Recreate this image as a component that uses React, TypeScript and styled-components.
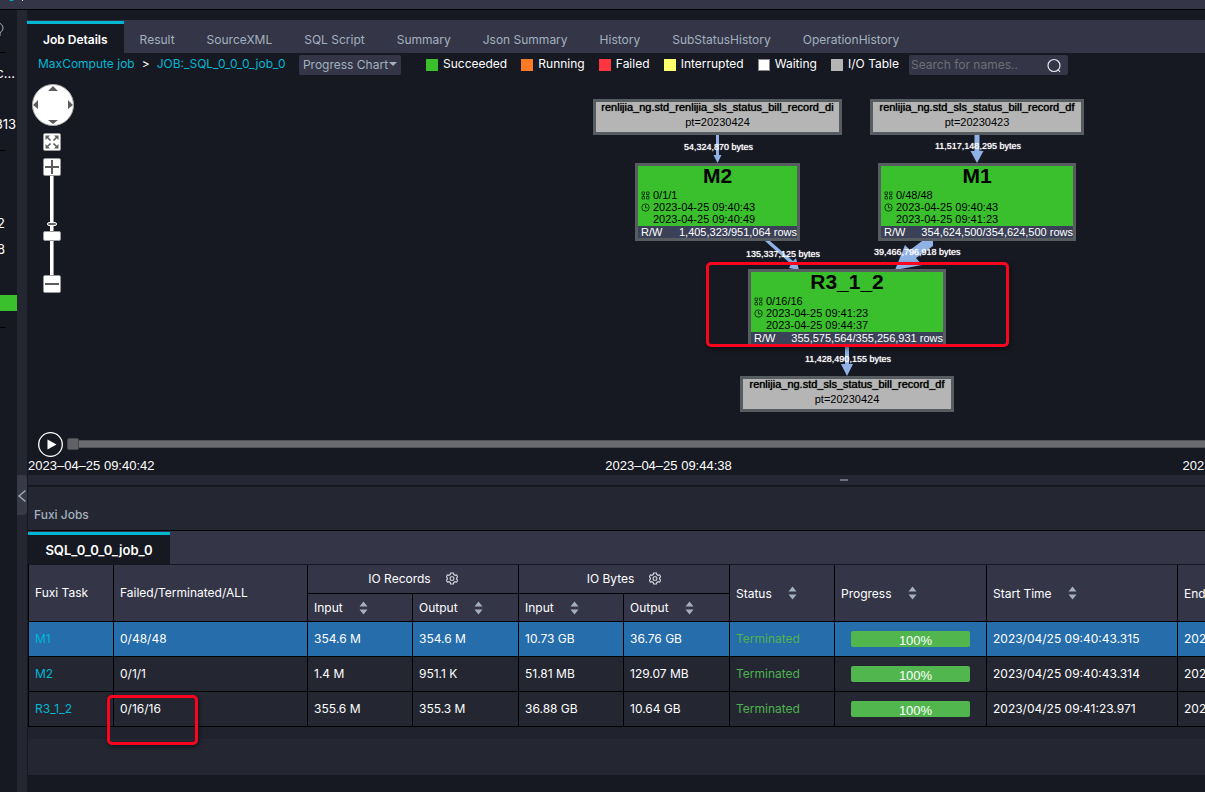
import React from "react";
import styled, { createGlobalStyle } from "styled-components";

const C = {
  deep: "#171922",
  panel: "#242732",
  raised: "#343648",
  cyan: "#00b7d3",
  muted: "#a3b1bf",
  green: "#3abf2d",
};

const GlobalStyle = createGlobalStyle`
  *, *::before { box-sizing: border-box; }
  html, body { margin: 0; background: ${C.deep}; overflow: hidden; }
  body { font-family: Inter, "Liberation Sans", sans-serif; font-size: 12px; color: #fff; }
  button, input { font: inherit; color: inherit; margin: 0; padding: 0; }
  a { text-decoration: none; color: ${C.cyan}; }
`;

const Shell = styled.div`
  position: relative;
  min-height: 100vh;
  overflow: hidden;
  display: flex;
  flex-direction: column;
`;

const TopBar = styled.header`
  height: 10px;
  padding-left: 9px;
  background: ${C.raised};
  border-bottom: 1px solid #000;
  svg { display: block; }
`;

const Body = styled.div`
  flex: 1;
  display: grid;
  grid-template-columns: 17px 10px minmax(0, 1fr);
`;

const Sidebar = styled.aside`
  overflow: hidden;
  display: flex;
  flex-direction: column;
  background: ${C.deep};
`;

const SideRow = styled.div<{ $h: number; $end?: number }>`
  height: ${(p) => p.$h}px;
  padding-right: ${(p) => p.$end ?? 0}px;
  display: flex;
  justify-content: flex-end;
  align-items: center;
  white-space: nowrap;
  font-size: 13px;
  svg { flex: none; }
`;

const SideRule = styled.hr`
  width: 6px;
  height: 1px;
  margin: 0;
  border: 0;
  background: #000;
`;

const SideStatus = styled.div`
  height: 16px;
  margin-bottom: 16px;
  background: ${C.green};
`;

const Gutter = styled.div`
  background: ${C.panel};
  padding-top: 465px;
`;

const CollapseButton = styled.button`
  display: flex;
  align-items: center;
  justify-content: center;
  width: 10px;
  height: 40px;
  padding-top: 2px;
  border: 0;
  border-radius: 0 4px 4px 0;
  background: #383a47;
  color: ${C.muted};
  svg { flex: none; }
`;

const Main = styled.main`
  display: flex;
  flex-direction: column;
  overflow: hidden;
`;

const TabBar = styled.nav<{ $top: number }>`
  margin-top: ${(p) => p.$top}px;
  height: 33px;
  display: flex;
  background: ${C.raised};
`;

const Tab = styled.button<{ $active?: boolean }>`
  margin-top: 1px;
  padding: 1px 16px 0;
  border: 0;
  border-top: 3px solid ${(p) => (p.$active ? C.cyan : "transparent")};
  background: ${(p) => (p.$active ? C.deep : "transparent")};
  color: ${(p) => (p.$active ? "#fff" : C.muted)};
  font-weight: ${(p) => (p.$active ? 600 : 400)};
  white-space: nowrap;
`;

const JobTab = styled(Tab)`
  min-width: 142px;
  font-size: 13px;
`;

const Toolbar = styled.div`
  height: 25px;
  display: flex;
  align-items: flex-start;
  padding: 2px 0 0 11px;
  white-space: nowrap;
`;

const Crumbs = styled.div`
  width: 261px;
  height: 17px;
  display: flex;
  align-items: center;
  gap: 7px;
`;

const ModeButton = styled.button`
  width: 102px;
  height: 20px;
  display: flex;
  align-items: center;
  justify-content: center;
  gap: 1px;
  padding-bottom: 2px;
  border: 0;
  border-radius: 2px;
  background: ${C.raised};
  color: ${C.muted};
`;

const Legend = styled.div`
  display: flex;
  width: 508px;
  height: 17px;
  padding: 0 10px 0 25px;
  justify-content: space-between;
`;

const LegendItem = styled.span`
  display: flex;
  align-items: center;
  gap: 5px;
`;

const Swatch = styled.i<{ $color: string }>`
  width: 12px;
  height: 12px;
  margin-top: 2px;
  background: ${(p) => p.$color};
  border: 1px solid ${(p) => (p.$color === "#ffffff" ? "#888" : p.$color)};
`;

const SearchBox = styled.label`
  width: 159px;
  height: 20px;
  display: flex;
  align-items: center;
  padding: 0 6px 0 2px;
  background: ${C.raised};
  border-radius: 2px;
`;

const SearchInput = styled.input`
  flex: 1;
  min-width: 0;
  padding-bottom: 2px;
  border: 0;
  outline: 0;
  background: transparent;
  &::placeholder { color: #6d6e73; opacity: 1; }
`;

const Canvas = styled.section`
  position: relative;
  height: 352px;
  font-family: "Liberation Sans", Arial, sans-serif;
`;

const Edges = styled.svg`
  position: absolute;
  inset: 0;
  width: 100%;
  height: 100%;
  fill: #8fb1e6;
`;

const Node = styled.div<{ $x: number; $y: number; $w: number }>`
  position: absolute;
  left: ${(p) => p.$x}px;
  top: ${(p) => p.$y}px;
  width: ${(p) => p.$w}px;
  border: 3px solid #575c60;
  font-size: 11px;
  line-height: 12px;
  color: #000;
  white-space: nowrap;
`;

const TableNode = styled(Node)`
  height: 36px;
  background: #b5b5b5;
  display: flex;
  flex-direction: column;
  align-items: center;
  line-height: 10px;
  gap: 5px;
`;

const TableName = styled.span`
  text-shadow: 0 0 1px #000;
`;

const TaskNode = styled(Node)`
  height: 78px;
  background: ${C.green};
`;

const TaskTitle = styled.h2`
  margin: 0;
  height: 23px;
  font-size: 21px;
  line-height: 19px;
  text-align: center;
`;

const TaskLine = styled.div`
  display: flex;
  align-items: center;
  gap: 3px;
  height: 12px;
  padding-left: 3px;
  svg { width: 9px; flex: none; }
`;

const TaskFooter = styled.div`
  display: flex;
  justify-content: space-between;
  height: 12px;
  margin-top: 1px;
  padding-left: 3px;
  background: #3b4257;
  color: #fff;
`;

const EdgeLabel = styled.span<{ $x: number; $y: number }>`
  position: absolute;
  left: ${(p) => p.$x}px;
  top: ${(p) => p.$y}px;
  font-size: 9px;
  line-height: 10px;
  white-space: nowrap;
  text-shadow: 0 0 1px #fff;
`;

const ZoomPanel = styled.div`
  position: absolute;
  left: 5px;
  top: 6px;
  width: 42px;
  display: flex;
  flex-direction: column;
  align-items: center;
`;

const PanButton = styled.button`
  width: 42px;
  height: 42px;
  margin-bottom: 7px;
  border: 1px solid #aaa;
  border-radius: 50%;
  background: #fff;
  svg { display: block; }
`;

const SquareButton = styled.button<{ $gap?: number }>`
  width: 18px;
  height: 18px;
  margin: 0 2px ${(p) => p.$gap ?? 0}px 0;
  border: 1px solid #999;
  border-radius: 2px;
  background: #fff;
  svg { display: block; }
`;

const ZoomTrack = styled.div`
  position: relative;
  width: 18px;
  height: 99px;
  margin-right: 2px;
  &::before {
    content: "";
    position: absolute;
    left: 4px;
    top: 46px;
    width: 10px;
    height: 4px;
    border: 1px solid #fff;
    border-radius: 2px;
    background: #666;
    z-index: 1;
  }
`;

const ZoomSlider = styled.input`
  display: block;
  width: 18px;
  height: 99px;
  appearance: none;
  background: transparent;
  writing-mode: vertical-lr;
  direction: rtl;
  &::-webkit-slider-runnable-track {
    width: 4px;
    background: #fff;
    border-right: 1px solid #999;
  }
  &::-webkit-slider-thumb {
    appearance: none;
    width: 18px;
    height: 10px;
    margin-left: -7px;
    background: #fff;
    border: 1px solid #999;
    border-radius: 2px;
  }
`;

const Timeline = styled.section`
  min-width: 1282px;
  height: 45px;
  padding-left: 1px;
`;

const TimelineRow = styled.div`
  display: flex;
  align-items: center;
  height: 29px;
  padding-left: 10px;
  gap: 4px;
`;

const PlayButton = styled.button`
  width: 25px;
  height: 25px;
  border: 0;
  background: transparent;
  svg { display: block; }
`;

const TimeSlider = styled.input`
  flex: 1;
  height: 12px;
  && { margin-bottom: 2px; }
  appearance: none;
  background: transparent;
  &::-webkit-slider-runnable-track {
    height: 8px;
    background: #6a6b6e;
    border: solid #505156;
    border-width: 1px 0;
  }
  &::-webkit-slider-thumb {
    appearance: none;
    width: 12px;
    height: 12px;
    margin-top: -3px;
    border: 1px solid #48494d;
    border-radius: 2px;
    background: #606164;
  }
`;

const TimeLabels = styled.div`
  display: flex;
  justify-content: space-between;
  font-size: 13px;
  line-height: 14px;
  font-family: "Liberation Sans", Arial, sans-serif;
`;

const Splitter = styled.div`
  min-width: 1632px;
  height: 12px;
  margin-left: 1px;
  display: flex;
  justify-content: center;
  padding-top: 4px;
  background: #252735;
  border-bottom: 2px solid ${C.deep};
  &::before { content: ""; width: 8px; height: 2px; background: #6b6d7a; }
`;

const JobsPanel = styled.section`
  border-left: 1px solid ${C.deep};
  background: #20222e;
`;

const JobsTitle = styled.h1`
  margin: 0;
  height: 44px;
  padding: 12px 6px 0;
  font-size: 12px;
  line-height: 32px;
  font-weight: 500;
  color: ${C.muted};
  background: ${C.panel};
  border-bottom: 1px solid #000;
`;

const Table = styled.table`
  width: 1341px;
  table-layout: fixed;
  border-collapse: separate;
  border-spacing: 0;
  border-left: 1px solid #000;
  border-top: 1px solid ${C.deep};
  font-weight: 400;
  text-align: left;
`;

const cell = `
  border-right: 1px solid #000;
  border-bottom: 1px solid #000;
  white-space: nowrap;
`;

const Th = styled.th<{ $h?: number; $raised?: boolean }>`
  ${cell}
  height: ${(p) => p.$h ?? 57}px;
  padding: 0 6px ${(p) => (p.$raised ? 2 : 0)}px;
  background: ${C.raised};
  font-weight: 400;
`;

const HeadContent = styled.div<{ $center?: boolean }>`
  display: flex;
  align-items: center;
  justify-content: ${(p) => (p.$center ? "center" : "flex-start")};
  gap: ${(p) => (p.$center ? 15 : 16)}px;
`;

const IconButton = styled.button`
  display: flex;
  border: 0;
  background: transparent;
  color: ${C.muted};
`;

const Row = styled.tr<{ $selected?: boolean }>`
  background: ${(p) => (p.$selected ? "#266dab" : C.panel)};
`;

const Td = styled.td`
  ${cell}
  height: 35px;
  padding: 0 6px 2px;
`;

const ProgressTd = styled(Td)`
  padding: 0 16px;
`;

const Terminated = styled.span`
  color: #4eb24f;
`;

const Progress = styled.div`
  height: 16px;
  padding-left: 10px;
  border-radius: 2px;
  background: #52b64f;
  font-family: "Liberation Sans", Arial, sans-serif;
  font-size: 13px;
  line-height: 19px;
  text-align: center;
`;

const Footer = styled.div`
  height: 36px;
  margin-top: 12px;
  background: ${C.panel};
`;

const Marker = styled.div<{ $x: number; $y: number; $w: number; $h: number }>`
  position: absolute;
  left: ${(p) => p.$x}px;
  top: ${(p) => p.$y}px;
  width: ${(p) => p.$w}px;
  height: ${(p) => p.$h}px;
  border: 3px solid #fb0420;
  border-radius: 5px;
  box-shadow: 1px 2px 4px rgba(0, 0, 0, 0.5);
  pointer-events: none;
`;

const SortIcon = () => (
  <svg width="9" height="14" viewBox="0 0 9 14" fill="currentColor">
    <path d="M4.5 0.5 8.5 5.5H.5zM4.5 13.5.5 8.5h8z" />
  </svg>
);

const GearIcon = () => (
  <svg width="12" height="13" viewBox="0 0 12 13" fill="none" stroke="#d5d9df" strokeWidth="1.1">
    <path d="M4.6 1h2.8l.4 1.6 1.3.7 1.5-.5 1 2-1 1.1v1.2l1 1.1-1 2-1.5-.5-1.3.7-.4 1.6H4.6l-.4-1.6-1.3-.7-1.5.5-1-2 1-1.1V5.9l-1-1.1 1-2 1.5.5 1.3-.7z" />
    <rect x="4.2" y="4.7" width="3.6" height="3.6" rx="1" />
  </svg>
);

const GridIcon = () => (
  <svg height="9" viewBox="0 0 9 9" fill="none" stroke="#123d0e" strokeWidth="0.9">
    <path d="M1 1h2.5v2.5H1zM1 5.5h2.5V8H1zM5.5 1H8v2.5H5.500zM5.5 5.5H8V8H5.500zM2.5 3.5v2M7 3.5v2" />
  </svg>
);

const ClockIcon = () => (
  <svg height="9" viewBox="0 0 9 9" fill="none" stroke="#123d0e" strokeWidth="1">
    <circle cx="4.5" cy="4.5" r="3.7" />
    <path d="M4.5 2v2.8H6.5" />
  </svg>
);

const TABS = ["Job Details", "Result", "SourceXML", "SQL Script", "Summary", "Json Summary", "History", "SubStatusHistory", "OperationHistory"];

const LEGEND = [
  ["Succeeded", C.green],
  ["Running", "#ff7a26"],
  ["Failed", "#ff3640"],
  ["Interrupted", "#fbff6b"],
  ["Waiting", "#ffffff"],
  ["I/O Table", "#b5b5b5"],
];

const TABLE_NODES = [
  { x: 566, y: 21, w: 249, name: "renlijia_ng.std_renlijia_sls_status_bill_record_di", pt: "pt=20230424" },
  { x: 843, y: 21, w: 214, name: "renlijia_ng.std_sls_status_bill_record_df", pt: "pt=20230423" },
  { x: 713, y: 298, w: 214, name: "renlijia_ng.std_sls_status_bill_record_df", pt: "pt=20230424" },
];

const TASK_NODES = [
  { x: 608, y: 85, w: 165, name: "M2", count: "0/1/1", start: "2023-04-25 09:40:43", end: "2023-04-25 09:40:49", rows: "1,405,323/951,064 rows" },
  { x: 851, y: 85, w: 198, name: "M1", count: "0/48/48", start: "2023-04-25 09:40:43", end: "2023-04-25 09:41:23", rows: "354,624,500/354,624,500 rows" },
  { x: 721, y: 191, w: 198, name: "R3_1_2", count: "0/16/16", start: "2023-04-25 09:41:23", end: "2023-04-25 09:44:37", rows: "355,575,564/355,256,931 rows" },
];

const EDGE_LABELS = [
  { x: 657, y: 64, text: "54,324,870 bytes" },
  { x: 908, y: 63, text: "11,517,148,295 bytes" },
  { x: 719, y: 171, text: "135,337,125 bytes" },
  { x: 847, y: 169, text: "39,466,796,918 bytes" },
  { x: 778, y: 276, text: "11,428,490,155 bytes" },
];

const COLUMNS = [85, 194, 105, 106, 105, 106, 105, 152, 191, 191];

const TASKS = [
  { name: "M1", cells: ["0/48/48", "354.6 M", "354.6 M", "10.73 GB", "36.76 GB"], start: "2023/04/25 09:40:43.315", end: "2023/04/25 09:41:23.970" },
  { name: "M2", cells: ["0/1/1", "1.4 M", "951.1 K", "51.81 MB", "129.07 MB"], start: "2023/04/25 09:40:43.314", end: "2023/04/25 09:40:49.120" },
  { name: "R3_1_2", cells: ["0/16/16", "355.6 M", "355.3 M", "36.88 GB", "10.64 GB"], start: "2023/04/25 09:41:23.971", end: "2023/04/25 09:44:37.480" },
];

function Sortable({ label }: { label: string }) {
  return (
    <HeadContent>
      {label}
      <IconButton aria-label={`Sort by ${label}`}><SortIcon /></IconButton>
    </HeadContent>
  );
}

function JobGraph() {
  return (
    <Canvas>
      <Edges>
        <path d="M689 57h3v20h2.5L690.5 85 686.5 77h2.5z" />
        <path d="M947.5 57h5v16h4L950 85l-6.5-12h4z" />
        <path d="M738 163h5l23 20 3-3 3 12-10-2 2-4z" />
        <path d="M895 163h11v5l-17 12 6 7-27 5 10-25 5 5z" />
        <path d="M818 269h4v17h4l-6 12-6-12h4z" />
      </Edges>
      {TABLE_NODES.map((n) => (
        <TableNode key={n.x} $x={n.x} $y={n.y} $w={n.w}>
          <TableName>{n.name}</TableName>
          <span>{n.pt}</span>
        </TableNode>
      ))}
      {TASK_NODES.map((n) => (
        <TaskNode key={n.name} $x={n.x} $y={n.y} $w={n.w}>
          <TaskTitle>{n.name}</TaskTitle>
          <TaskLine><GridIcon />{n.count}</TaskLine>
          <TaskLine><ClockIcon />{n.start}</TaskLine>
          <TaskLine><svg />{n.end}</TaskLine>
          <TaskFooter><span>R/W</span><span>{n.rows}</span></TaskFooter>
        </TaskNode>
      ))}
      {EDGE_LABELS.map((l) => (
        <EdgeLabel key={l.text} $x={l.x} $y={l.y}>{l.text}</EdgeLabel>
      ))}
      <ZoomPanel>
        <PanButton aria-label="Pan">
          <svg width="40" height="40" viewBox="0 0 40 40" fill="#5c5c5c">
            <path d="M20 1l5 5H15zM20 39l-5-4h10zM0 20l5-5v9zM40 20l-5-5v9z" />
          </svg>
        </PanButton>
        <SquareButton aria-label="Fit to screen" $gap={7}>
          <svg width="16" height="16" viewBox="0 0 16 16" fill="#5c5c5c" stroke="#5c5c5c" strokeWidth="1.6">
            <path d="M3.500 3.500l3 3M12.500 3.500l-3 3M3.500 12.500l3-3M12.500 12.500l-3-3" />
            <path stroke="none" d="M1.500 1.500h4.500L1.500 6zM14.500 1.500V6L10 1.500zM1.500 14.500V10L6 14.500zM14.500 14.500H10l4.500-4.500z" />
          </svg>
        </SquareButton>
        <SquareButton aria-label="Zoom in">
          <svg width="16" height="16" viewBox="0 0 16 16" stroke="#5c5c5c" strokeWidth="2"><path d="M8 1v14M1 8h14" /></svg>
        </SquareButton>
        <ZoomTrack>
          <ZoomSlider type="range" aria-label="Zoom level" defaultValue={38} />
        </ZoomTrack>
        <SquareButton aria-label="Zoom out">
          <svg width="16" height="16" viewBox="0 0 16 16" stroke="#5c5c5c" strokeWidth="2"><path d="M1 8h14" /></svg>
        </SquareButton>
      </ZoomPanel>
    </Canvas>
  );
}

function TaskTable() {
  return (
    <Table>
      <colgroup>{COLUMNS.map((w, i) => <col key={i} width={w} />)}</colgroup>
      <thead>
        <tr>
          <Th rowSpan={2} $raised>Fuxi Task</Th>
          <Th rowSpan={2} $raised>Failed/Terminated/ALL</Th>
          {["IO Records", "IO Bytes"].map((g) => (
            <Th key={g} colSpan={2} $h={29} $raised>
              <HeadContent $center>
                {g}
                <IconButton aria-label={`${g} unit`}><GearIcon /></IconButton>
              </HeadContent>
            </Th>
          ))}
          {["Status", "Progress", "Start Time", "End Time"].map((h) => (
            <Th key={h} rowSpan={2}><Sortable label={h} /></Th>
          ))}
        </tr>
        <tr>
          {["Input", "Output", "Input", "Output"].map((h, i) => (
            <Th key={i} $h={28}><Sortable label={h} /></Th>
          ))}
        </tr>
      </thead>
      <tbody>
        {TASKS.map((t, i) => (
          <Row key={t.name} $selected={i === 0}>
            <Td><a href={`#${t.name}`}>{t.name}</a></Td>
            {t.cells.map((c, j) => <Td key={j}>{c}</Td>)}
            <Td><Terminated>Terminated</Terminated></Td>
            <ProgressTd><Progress>100%</Progress></ProgressTd>
            <Td>{t.start}</Td>
            <Td>{t.end}</Td>
          </Row>
        ))}
      </tbody>
    </Table>
  );
}

export default function App() {
  return (
    <Shell>
      <GlobalStyle />
      <TopBar>
        <svg width="16" height="2" viewBox="0 0 16 2">
          <path d="M0 0h5L3.5 1h-2z" fill={C.cyan} />
          <path d="M13 0h1v1h-1z" fill="#fff" />
        </svg>
      </TopBar>
      <Body>
        <Sidebar>
          <SideRow $h={42} $end={13}>
            <svg width="12" height="18" viewBox="0 0 12 18" fill="none" stroke={C.muted}><circle cx="6" cy="6" r="5" /><path d="M8 10v4" /></svg>
          </SideRow>
          <SideRule />
          <SideRow $h={40} $end={2}>sc...</SideRow>
          <SideRow $h={5} />
          <SideRow $h={52} $end={1}>313</SideRow>
          <SideRule />
          <SideRow $h={58} />
          <SideRow $h={28} $end={12}>2</SideRow>
          <SideRow $h={24} $end={12}>8</SideRow>
          <SideRow $h={34} />
          <SideStatus />
          <SideRule />
        </Sidebar>
        <Gutter>
          <CollapseButton aria-label="Collapse sidebar">
            <svg width="8" height="12" viewBox="0 0 8 12" fill="none" stroke="currentColor" strokeWidth="1.3"><path d="M7.5.5 1 6l6.5 5.5" /></svg>
          </CollapseButton>
        </Gutter>
        <Main>
          <TabBar $top={10}>
            {TABS.map((t, i) => <Tab key={t} $active={i === 0}>{t}</Tab>)}
          </TabBar>
          <Toolbar>
            <Crumbs>
              <a href="#jobs">MaxCompute job</a>
              <span>&gt;</span>
              <a href="#job">JOB:_SQL_0_0_0_job_0</a>
            </Crumbs>
            <ModeButton>
              Progress Chart
              <svg width="8" height="4" viewBox="0 0 8 4" fill="currentColor"><path d="M0 0h8L4 4z" /></svg>
            </ModeButton>
            <Legend>
              {LEGEND.map(([label, color]) => (
                <LegendItem key={label}><Swatch $color={color} />{label}</LegendItem>
              ))}
            </Legend>
            <SearchBox>
              <SearchInput type="text" aria-label="Search for names" placeholder="Search for names.." />
              <svg width="15" height="15" viewBox="0 0 15 15" fill="none" stroke="#e3e5e9" strokeWidth="1.2"><circle cx="7" cy="7.5" r="6" /><path d="M11 11.5l2 2.5" /></svg>
            </SearchBox>
          </Toolbar>
          <JobGraph />
          <Timeline>
            <TimelineRow>
              <PlayButton aria-label="Play">
                <svg width="25" height="25" viewBox="0 0 25 25"><circle cx="12.5" cy="12.5" r="11.8" fill="none" stroke="#fff" strokeWidth="1.3" /><path d="M9.5 7.5l9 5-9 5z" fill="#fff" /></svg>
              </PlayButton>
              <TimeSlider type="range" aria-label="Timeline position" defaultValue={0} />
            </TimelineRow>
            <TimeLabels>
              <span>2023–04–25 09:40:42</span>
              <span>2023–04–25 09:44:38</span>
              <span>2023–04–25 09:48:35</span>
            </TimeLabels>
          </Timeline>
          <Splitter />
          <JobsPanel>
            <JobsTitle>Fuxi Jobs</JobsTitle>
            <TabBar $top={0}><JobTab $active>SQL_0_0_0_job_0</JobTab></TabBar>
            <TaskTable />
            <Footer />
          </JobsPanel>
        </Main>
      </Body>
      <Marker $x={706} $y={262} $w={303} $h={85} />
      <Marker $x={107} $y={695} $w={91} $h={50} />
    </Shell>
  );
}
